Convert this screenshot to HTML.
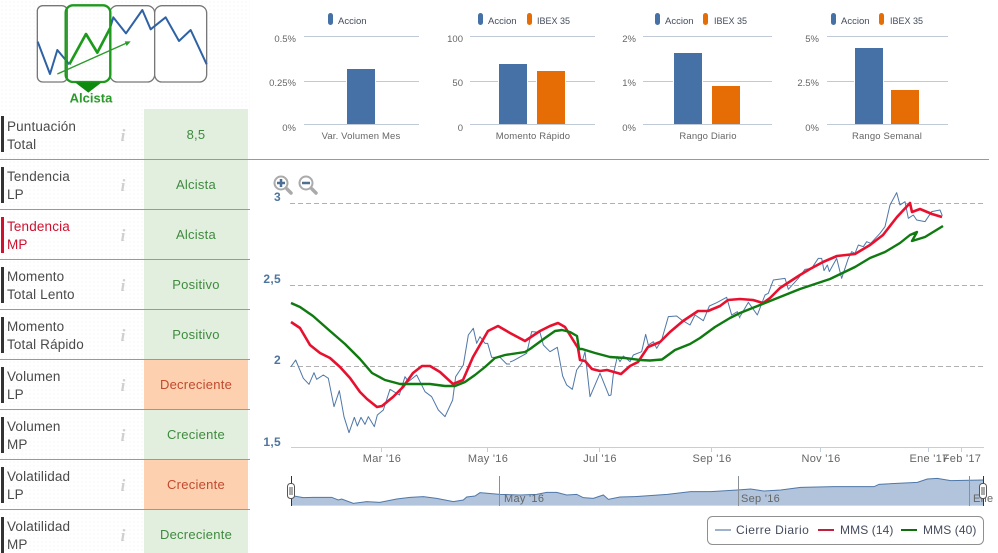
<!DOCTYPE html>
<html><head><meta charset="utf-8"><style>
html,body{margin:0;padding:0;background:#fff}
#p{position:relative;width:998px;height:553px;overflow:hidden;font-family:"Liberation Sans",sans-serif;background:#fff}
#dots{position:absolute;left:0;top:0;width:250px;height:553px;background-image:radial-gradient(#f1f1f1 .7px,transparent .8px);background-size:4px 4px}
.c{position:absolute;left:144px;width:104px;text-align:center;font-size:13px;line-height:51px;height:50px;letter-spacing:.25px}
.g{background:#e2efdf;color:#3f8a3f}.o{background:#fdd0b0;color:#c24a2e}
.l{position:absolute;left:7px;font-size:13.5px;line-height:18px;color:#4a4a4a;letter-spacing:.15px;margin-top:1px}
.b{position:absolute;left:1px;width:3px;height:36px;background:#333}
.s{position:absolute;left:0;width:250px;height:1px;background:#999}
.i{position:absolute;left:119px;width:8px;text-align:center;font:italic bold 17px "Liberation Serif",serif;color:#cfcfcf;line-height:18px;margin-top:1px}
svg{position:absolute;left:0;top:0}
text{font-family:"Liberation Sans",sans-serif}
</style></head><body><div id="p">
<div id="dots"></div>
<div class="c g" style="top:109px">8,5</div>
<div class="c g" style="top:159px">Alcista</div>
<div class="c g" style="top:209px">Alcista</div>
<div class="c g" style="top:259px">Positivo</div>
<div class="c g" style="top:309px">Positivo</div>
<div class="c o" style="top:359px">Decreciente</div>
<div class="c g" style="top:409px">Creciente</div>
<div class="c o" style="top:459px">Creciente</div>
<div class="c g" style="top:509px;height:44px">Decreciente</div>

<div class="b" style="top:116px"></div><div class="l" style="top:117px">Puntuación<br>Total</div><div class="i" style="top:126px">i</div>
<div class="s" style="top:159px;width:989px"></div>
<div class="b" style="top:167px"></div><div class="l" style="top:167px">Tendencia<br>LP</div><div class="i" style="top:176px">i</div>
<div class="s" style="top:209px"></div>
<div class="b" style="top:217px;background:#d0102e"></div><div class="l" style="top:217px;color:#d0102e">Tendencia<br>MP</div><div class="i" style="top:226px">i</div>
<div class="s" style="top:259px"></div>
<div class="b" style="top:267px"></div><div class="l" style="top:267px">Momento<br>Total Lento</div><div class="i" style="top:276px">i</div>
<div class="s" style="top:309px"></div>
<div class="b" style="top:317px"></div><div class="l" style="top:317px">Momento<br>Total Rápido</div><div class="i" style="top:326px">i</div>
<div class="s" style="top:359px"></div>
<div class="b" style="top:367px"></div><div class="l" style="top:367px">Volumen<br>LP</div><div class="i" style="top:376px">i</div>
<div class="s" style="top:409px"></div>
<div class="b" style="top:417px"></div><div class="l" style="top:417px">Volumen<br>MP</div><div class="i" style="top:426px">i</div>
<div class="s" style="top:459px"></div>
<div class="b" style="top:467px"></div><div class="l" style="top:467px">Volatilidad<br>LP</div><div class="i" style="top:476px">i</div>
<div class="s" style="top:509px"></div>
<div class="b" style="top:517px"></div><div class="l" style="top:517px">Volatilidad<br>MP</div><div class="i" style="top:526px">i</div>

<svg width="998" height="553" viewBox="0 0 998 553" fill="none">
<!-- logo -->
<g transform="scale(.33333)" stroke-linejoin="round">
<rect x="112" y="17" width="90" height="229" rx="16" fill="#fff" stroke="#777" stroke-width="4"/>
<rect x="330" y="17" width="134" height="229" rx="22" fill="#fff" stroke="#777" stroke-width="4"/>
<rect x="464" y="17" width="156" height="229" rx="22" fill="#fff" stroke="#777" stroke-width="4"/>
<polyline points="113,125 150,222 172,150 208,193" stroke="#2f62a5" stroke-width="6"/>
<polyline points="330,85 340,52 378,100 427,30 452,88 497,52 537,123 572,90 620,193" stroke="#2f62a5" stroke-width="6"/>
<rect x="197" y="16" width="134" height="230" rx="22" stroke="#1c9a1c" stroke-width="7"/>
<polyline points="208,193 258,102 292,158 330,85" stroke="#1c9a1c" stroke-width="8"/>
<polyline points="172,222 380,129" stroke="#2a9a2a" stroke-width="4"/>
<polygon points="392,124 374,124 380,138" fill="#2a9a2a"/>
<polygon points="225,247 305,247 265,278" fill="#0e8a0e"/>
</g>
<text x="91" y="102.500" text-anchor="middle" font-size="13" font-weight="700" fill="#2a9a2a">Alcista</text>

<!-- bar charts -->
<g stroke="#c0cad6" stroke-width="1">
<path d="M304 36.500H419M304 81.500H419M304 124.500H419"/>
<path d="M470 36.500H595M470 81.500H595M470 124.500H595"/>
<path d="M643 36.500H772M643 81.500H772M643 124.500H772"/>
<path d="M827 36.500H948M827 81.500H948M827 124.500H948"/>
</g>
<g fill="#fff">
<rect x="346" y="68" width="30" height="56"/><rect x="498" y="63" width="30" height="61"/><rect x="536" y="70" width="30" height="54"/>
<rect x="673" y="52" width="30" height="72"/><rect x="711" y="85" width="30" height="39"/><rect x="854" y="47" width="30" height="77"/><rect x="890" y="89" width="30" height="35"/>
</g>
<g fill="#4671a6">
<rect x="347" y="69" width="28" height="55"/><rect x="499" y="64" width="28" height="60"/><rect x="674" y="53" width="28" height="71"/><rect x="855" y="48" width="28" height="76"/>
<rect x="328" y="13" width="5" height="12" rx="2.500"/><rect x="478" y="13" width="5" height="12" rx="2.500"/><rect x="655" y="13" width="5" height="12" rx="2.500"/><rect x="831" y="13" width="5" height="12" rx="2.500"/>
</g>
<g fill="#e66c05">
<rect x="537" y="71" width="28" height="53"/><rect x="712" y="86" width="28" height="38"/><rect x="891" y="90" width="28" height="34"/>
<rect x="527" y="13" width="5" height="12" rx="2.500"/><rect x="703" y="13" width="5" height="12" rx="2.500"/><rect x="879" y="13" width="5" height="12" rx="2.500"/>
</g>
<g font-size="9.500" fill="#444b5c">
<text x="338" y="24">Accion</text><text x="488" y="24">Accion</text><text x="665" y="24">Accion</text><text x="841" y="24">Accion</text>
<g font-size="9"><text x="537" y="24">IBEX 35</text><text x="714" y="24">IBEX 35</text><text x="890" y="24">IBEX 35</text></g>
</g>
<g font-size="9.500" fill="#666" text-anchor="end">
<text x="296" y="42">0.5%</text><text x="296" y="86">0.25%</text><text x="296" y="131">0%</text>
<text x="463" y="42">100</text><text x="463" y="86">50</text><text x="463" y="131">0</text>
<text x="636" y="42">2%</text><text x="636" y="86">1%</text><text x="636" y="131">0%</text>
<text x="819" y="42">5%</text><text x="819" y="86">2.5%</text><text x="819" y="131">0%</text>
</g>
<g font-size="9.500" fill="#666" text-anchor="middle" letter-spacing=".15">
<text x="361" y="139">Var. Volumen Mes</text><text x="533" y="139">Momento Rápido</text><text x="708" y="139">Rango Diario</text><text x="887" y="139">Rango Semanal</text>
</g>

<!-- zoom icons -->
<g stroke="#aaa" fill="#fff">
<line x1="287" y1="189" x2="291" y2="193" stroke-width="3.500" stroke-linecap="round"/>
<circle cx="281" cy="183" r="6.500" stroke-width="2"/>
<line x1="312" y1="189" x2="316" y2="193" stroke-width="3.500" stroke-linecap="round"/>
<circle cx="306" cy="183" r="6.500" stroke-width="2"/>
</g>
<path d="M277 183h8M281 179v8M302 183h8" stroke="#4d6f94" stroke-width="2.500"/>

<!-- main chart -->
<path d="M290 203.500H984M290 285.500H984M290 366.500H984" stroke="#b0b0b0" stroke-dasharray="5 3"/>
<path d="M291 447.500H984" stroke="#c0d0e0"/>
<path d="M381.500 447V452M487.500 447V452M599.500 447V452M711.500 447V452M820.500 447V452M928.500 447V452M961.500 447V452" stroke="#c0d0e0"/>
<g font-size="12" font-weight="700" fill="#4d759e" text-anchor="end" letter-spacing=".3">
<text x="281" y="201">3</text><text x="281" y="283">2,5</text><text x="281" y="364">2</text><text x="281" y="446">1,5</text>
</g>
<g font-size="11" fill="#666" text-anchor="middle" letter-spacing=".3">
<text x="382" y="462">Mar '16</text><text x="488" y="462">May '16</text><text x="600" y="462">Jul '16</text><text x="712" y="462">Sep '16</text><text x="821" y="462">Nov '16</text><text x="929" y="462">Ene '17</text><text x="962" y="462">Feb '17</text>
</g>
<g stroke="#4f77a8" stroke-width="1" stroke-linejoin="round">
<polyline vector-effect="non-scaling-stroke" transform="translate(260 300) scale(.33333)" points="93,200 107,180 130,235 147,253 162,218 170,238 190,225 205,235 222,320 238,272 252,350 267,398 283,352 292,378 303,352 315,373 325,350 343,380 352,345 370,330 390,268 418,285 435,230 445,245 470,225 495,275 515,290 535,330 555,350 578,300 587,230 610,195 625,105 640,85 650,130 660,110 675,130 683,130 695,172 720,172 740,192 750,192"/>
<polyline vector-effect="non-scaling-stroke" transform="translate(500 290) scale(.33333)" points="30,216 40,212 80,190 95,125 120,127 130,165 150,185 172,172 188,258 200,285 217,298 230,240 245,220 255,185 270,320 300,250 327,317 333,315 340,253 352,200 360,215 370,198 390,215 400,195 425,185 437,133 445,165 460,155 470,175 485,150 505,80 530,78 545,90 570,105 585,75 610,92 628,48 650,38 680,22 695,75 712,65 720,85"/>
<polyline vector-effect="non-scaling-stroke" transform="translate(740 170) scale(.33333)" points="0,440 25,397 52,435 75,375 85,370 100,330 135,325 145,358 175,325 195,298 215,295 235,265 245,265 252,302 262,285 268,305 290,265 305,325 325,265 335,245 345,250 355,225 370,230 380,215 392,220 420,190 435,170 450,105 470,68 480,105 495,95 505,145 520,135 530,150 555,155 575,125 600,120 607,137"/>
</g>
<polyline stroke="#e8102f" stroke-width="2.600" stroke-linejoin="round" points="291,322 300,328 310,345 320,353 330,358 340,367 350,378 360,392 367,399 377,407 382,406 393,397 403,387 413,373 422,366 430,366 440,372 453,384 463,380 473,357 488,331 498,326 510,333 525,341 540,331 550,326 558,323 565,327 578,348 580,360 585,361 592,369 600,371 607,370 621,374 630,366 638,362 648,347 660,342 670,332 683,321 698,311 708,311 720,306 728,300 740,299 753,300 763,303 770,298 780,288 800,275 810,269 823,262 837,256 855,254 870,245 883,235 897,217 910,203 912,212 920,209 932,214 942,217"/>
<polyline stroke="#0f7a0f" stroke-width="2.400" stroke-linejoin="round" points="291,303 300,307 313,316 330,331 345,344 360,359 372,373 385,380 400,384 415,384 430,384 445,386 455,386 465,382 475,375 485,367 495,358 505,355 525,352 530,349 545,338 555,331 562,330 570,332 577,336 579,349 582,349 595,353 610,357 625,358 640,360 650,360.500 662,359.500 675,350 690,344 700,338 715,327 730,318 740,313 770,301 800,289 830,279 855,267 870,258 885,252 900,243 910,235 917,232 912,241 925,237 943,226"/>

<!-- navigator -->
<g transform="translate(270 445) scale(.33333)">
<polygon fill="#b1c4dc" points="65,182 65,152 100,158 130,157 185,157 205,165 215,162 250,175 290,170 330,172 380,162 420,157 460,155 500,160 550,170 580,165 590,156 615,153 630,143 690,148 750,150 800,148 830,142 860,142 890,150 920,148 940,158 970,160 1000,150 1015,163 1050,156 1092,155 1092,182"/>
<polyline vector-effect="non-scaling-stroke" stroke="#4f77a8" stroke-width="1" points="65,152 100,158 130,157 185,157 205,165 215,162 250,175 290,170 330,172 380,162 420,157 460,155 500,160 550,170 580,165 590,156 615,153 630,143 690,148 750,150 800,148 830,142 860,142 890,150 920,148 940,158 970,160 1000,150 1015,163 1050,156 1092,155"/>
</g>
<g transform="translate(634 445) scale(.33333)">
<polygon fill="#b1c4dc" points="0,182 0,155 100,148 170,140 230,140 310,135 350,132 390,138 440,135 500,127 600,125 720,125 735,118 850,112 880,102 910,100 950,107 1048,105 1048,182"/>
<polyline vector-effect="non-scaling-stroke" stroke="#4f77a8" stroke-width="1" points="0,155 100,148 170,140 230,140 310,135 350,132 390,138 440,135 500,127 600,125 720,125 735,118 850,112 880,102 910,100 950,107 1048,105"/>
</g>
<path d="M499.500 476V506M738.500 476V506M969.500 476V506" stroke="#8a9098"/>
<g font-size="11" fill="#666" letter-spacing=".3">
<text x="504" y="502">May '16</text><text x="741" y="502">Sep '16</text><text x="973" y="502">Ene</text>
</g>
<path d="M291.500 476V506M983.500 476V506" stroke="#333"/>
<rect x="287.500" y="483.500" width="7" height="15" rx="3" fill="#fff" stroke="#555"/>
<path d="M290 487V495M292 487V495" stroke="#555"/>
<rect x="979.500" y="483.500" width="7" height="15" rx="3" fill="#fff" stroke="#555"/>
<path d="M982 487V495M984 487V495" stroke="#555"/>

<!-- legend -->
<rect x="707.500" y="516.500" width="276" height="28" rx="5" fill="#fff" stroke="#909090"/>
<path d="M715 530H731" stroke="#9fb2cc" stroke-width="2"/>
<path d="M818 530H834" stroke="#c0203c" stroke-width="2"/>
<path d="M901 530H917" stroke="#0f6f0f" stroke-width="2"/>
<g font-size="12" fill="#444b5c">
<text x="736" y="534" letter-spacing=".45">Cierre Diario</text><text x="840" y="534" letter-spacing=".1">MMS (14)</text><text x="923" y="534" letter-spacing=".1">MMS (40)</text>
</g>
</svg>
</div></body></html>
